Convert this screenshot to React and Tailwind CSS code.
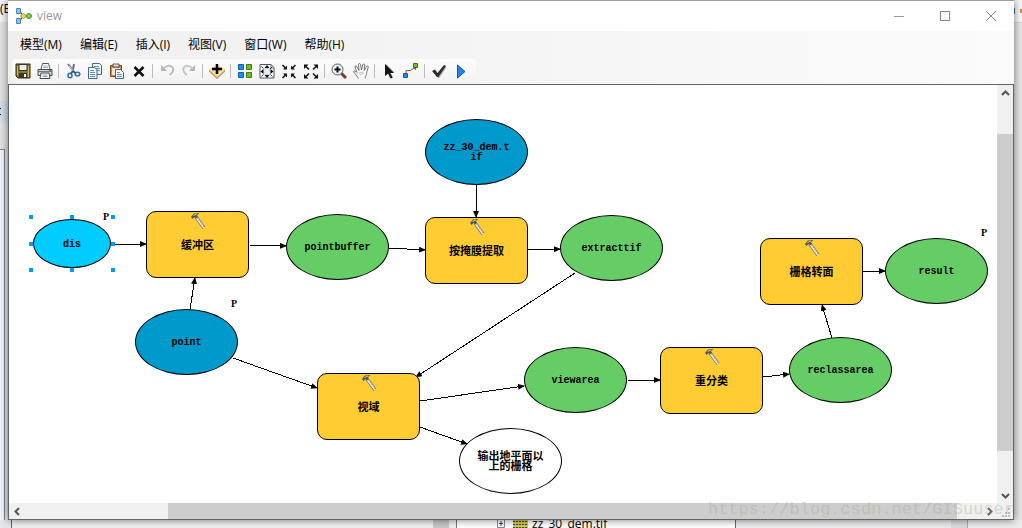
import React, { useState } from 'react';

const MENUS = ['模型(M)', '编辑(E)', '插入(I)', '视图(V)', '窗口(W)', '帮助(H)'];

const NODES = [
  { id: 'dis', type: 'value', label: 'dis', x: 24, y: 134 },
  { id: 'buffer', type: 'tool', label: '缓冲区', x: 137, y: 126 },
  { id: 'point', type: 'input', label: 'point', x: 126, y: 224 },
  { id: 'pointbuffer', type: 'output', label: 'pointbuffer', x: 277, y: 129 },
  { id: 'dem', type: 'input', label: 'zz_30_dem.tif', x: 416, y: 34 },
  { id: 'mask', type: 'tool', label: '按掩膜提取', x: 416, y: 132 },
  { id: 'extracttif', type: 'output', label: 'extracttif', x: 551, y: 130 },
  { id: 'viewshed', type: 'tool', label: '视域', x: 308, y: 288 },
  { id: 'viewarea', type: 'output', label: 'viewarea', x: 515, y: 262 },
  { id: 'above', type: 'empty', label: '输出地平面以上的栅格', x: 450, y: 343 },
  { id: 'reclass', type: 'tool', label: '重分类', x: 651, y: 262 },
  { id: 'reclassarea', type: 'output', label: 'reclassarea', x: 780, y: 252 },
  { id: 'topolygon', type: 'tool', label: '栅格转面', x: 751, y: 153 },
  { id: 'result', type: 'output', label: 'result', x: 876, y: 153 },
];

const EDGES = [
  [102, 159, 137, 159],
  [240, 160, 277, 161],
  [181, 224, 186, 193],
  [224, 273, 308, 303],
  [380, 163, 416, 165],
  [467, 99, 467, 132],
  [519, 165, 551, 164],
  [566, 188, 407, 292],
  [411, 316, 515, 301],
  [411, 342, 458, 359],
  [619, 295, 651, 295],
  [754, 292, 780, 289],
  [823, 253, 813, 220],
  [854, 186, 876, 186],
];

const PARAMS = [
  { x: 94, y: 127 },
  { x: 222, y: 214 },
  { x: 972, y: 143 },
];

const NODE_STYLE = {
  value: 'w-[78px] h-[49px] rounded-[50%] bg-[#00ccff]',
  input: 'w-[103px] h-[66px] rounded-[50%] bg-[#0099cc]',
  output: 'w-[103px] h-[66px] rounded-[50%] bg-[#66cc66]',
  empty: 'w-[103px] h-[66px] rounded-[50%] bg-white',
  tool: 'w-[103px] h-[67px] rounded-[10px] bg-[#ffcc33]',
};

function Icon({ children, size = 16 }) {
  return (
    <svg width={size} height={size} viewBox="0 0 16 16" fill="none" aria-hidden="true">
      {children}
    </svg>
  );
}

const ICONS = {
  save: (
    <Icon>
      <path d="M1 1h14v14H3l-2-2z" fill="#8c7a2c" stroke="#2f2a12" />
      <path d="M4 1.500h8v6H4z" fill="#e9edf0" stroke="#3a3520" />
      <path d="M4 10h8v5H4z" fill="#35352e" />
      <path d="M9 11h2v3H9z" fill="#f4f4f4" />
      <path d="M2.500 3v9M13.500 3v11" stroke="#cdb95c" />
    </Icon>
  ),
  print: (
    <Icon>
      <path d="M4 6l1.500-5.500h6L13 6" fill="#fff" stroke="#555" />
      <path d="M6 3h5M6 4.500h5" stroke="#9bb4cc" />
      <path d="M1 6.500h14v6H1z" fill="#d4d6d2" stroke="#4a4a48" />
      <path d="M1 8.500h14" stroke="#777" />
      <path d="M12 7.500h2" stroke="#3aa03a" />
      <path d="M4 10h8l1 5.500H3z" fill="#fff" stroke="#4a4a48" />
      <path d="M5.500 12h5M5.500 13.500h5" stroke="#7ba7cc" />
    </Icon>
  ),
  cut: (
    <Icon>
      <path d="M3 1l7 9M9 1L7.500 9" stroke="#6c7680" strokeWidth="2" />
      <path d="M4 3l5 6" stroke="#dfe4e8" />
      <ellipse cx="5" cy="12.500" rx="2" ry="2.300" stroke="#2a6fae" strokeWidth="1.500" />
      <ellipse cx="12.500" cy="11" rx="2.300" ry="1.800" stroke="#2a6fae" strokeWidth="1.500" />
      <path d="M6 10.500l2-2.500M10.500 10L8 8" stroke="#1f4f80" strokeWidth="1.500" />
    </Icon>
  ),
  copy: (
    <Icon>
      <path d="M5.500 .5h7l2 2v9h-9z" fill="#eef5fb" stroke="#46627c" />
      <path d="M7 3.500h5M7 5.500h6M7 7.500h6" stroke="#5c91c0" />
      <path d="M1.500 4.500h6l2.500 2v9H1.500z" fill="#f5f9fd" stroke="#46627c" />
      <path d="M3 7.500h4M3 9.500h5M3 11.500h5M3 13.500h5" stroke="#5c91c0" />
    </Icon>
  ),
  paste: (
    <Icon>
      <path d="M1.500 2.500h11v11h-11z" fill="#d98a3a" stroke="#7a4312" />
      <path d="M4 1h6v3H4z" fill="#e4e4e4" stroke="#555" />
      <path d="M3 5h8v7H3z" fill="#f6e4cc" />
      <path d="M6.500 6.500h5l3 3v6h-8z" fill="#f5f9fd" stroke="#46627c" />
      <path d="M8 9.500h3M8 11.500h5M8 13.500h5" stroke="#5c91c0" />
    </Icon>
  ),
  remove: (
    <Icon>
      <path d="M3.500 4l9 9M12.500 4l-9 9" stroke="#111" strokeWidth="2.500" />
    </Icon>
  ),
  undo: (
    <Icon>
      <path d="M2 2v6h6z" fill="#b4b4b4" />
      <path d="M4 6c3-4 8-4 10-1 .8 3-.5 5-3.500 7" stroke="#bdbdbd" strokeWidth="2" />
    </Icon>
  ),
  redo: (
    <Icon>
      <path d="M14 2v6H8z" fill="#b4b4b4" />
      <path d="M12 6C9 2 4 2 2.500 5c-.8 3 .5 5 3.500 7" stroke="#c6c6c6" strokeWidth="2" />
    </Icon>
  ),
  addData: (
    <Icon>
      <path d="M0 7l8-5 8 5v1.500L8 16 0 8.500z" fill="#b58a4e" />
      <path d="M0 7l8-5 8 5-8 7.500z" fill="#fbdc94" />
      <path d="M8 1v10M3 6h10" stroke="#000" strokeWidth="2.500" />
    </Icon>
  ),
  layout: (
    <Icon>
      <path d="M1.500 1.500h5v5h-5zM1.500 9.500h5v5h-5z" fill="#1e8ff0" stroke="#0b5eae" />
      <path d="M9.500 1.500h5v5h-5zM9.500 9.500h5v5h-5z" fill="#78b82a" stroke="#3d7d0c" />
    </Icon>
  ),
  fullExtent: (
    <Icon>
      <path d="M1 1.500h11l3 3V15H1z" fill="#fff" stroke="#555" />
      <path d="M12 1v4h3" stroke="#777" />
      <circle cx="8" cy="8.500" r="3.500" fill="#e3eef8" stroke="#bccbda" />
      <path d="M8 2l2.500 3h-5zM8 15l2.500-3h-5zM1.500 8.500l3-2.500v5zM14.500 8.500l-3-2.500v5z" fill="#111" />
      <path d="M2.500 3.500l2 2M13.500 13.500l-2-2M2.500 13.500l2-2M13 4l-2 2" stroke="#333" />
    </Icon>
  ),
  shrink: (
    <Icon>
      <path d="M1.500 2l3 3M14.500 2l-3 3M1.500 15l3-3M14.500 15l-3-3" stroke="#111" strokeWidth="1.500" />
      <path d="M6 2.500v4H2zM10 2.500v4h4zM6 14.500v-4H2zM10 14.500v-4h4z" fill="#111" />
    </Icon>
  ),
  expand: (
    <Icon>
      <path d="M3 3.500l3 3M13 3.500l-3 3M3 13.500l3-3M13 13.500l-3-3" stroke="#111" strokeWidth="1.500" />
      <path d="M1 1.500h4.500L1 6zM15 1.500h-4.500L15 6zM1 15.500h4.500L1 11zM15 15.500h-4.500L15 11z" fill="#111" />
    </Icon>
  ),
  zoomIn: (
    <Icon>
      <path d="M10 10l5 5" stroke="#7d3a2a" strokeWidth="3" />
      <circle cx="6.500" cy="6.500" r="5.500" fill="#eef3f7" stroke="#555b60" />
      <path d="M6.500 3.500v6M3.500 6.500h6" stroke="#111" strokeWidth="2" />
    </Icon>
  ),
  pan: (
    <Icon>
      <path
        d="M5.500 15.500C4 13 2.500 11 .8 9c0-1.500 1.500-1.500 3.200.5L2 4c0-1.500 1.500-1.500 2 0L6 7.500 5.500 1.500c.2-1.300 1.700-1.300 2 0L8.500 7 9.800 1.500c.5-1 1.800-.8 1.800.5L11.200 7.500l2.300-4c.7-1 1.800-.5 1.700.7L13.800 9c-.2 2-.5 3-1.500 4.500v2"
        fill="#fdfdfd"
        stroke="#555"
        strokeWidth=".8"
      />
      <path d="M6 10l4-1M7 12l4-2" stroke="#bbb" />
    </Icon>
  ),
  select: (
    <Icon>
      <path d="M5 1l8.500 8.500H9.500l2.500 5-2 1-2.500-5L4 13z" fill="#999" />
      <path d="M4 1l9 9H9l2.500 4.500-2 1L7 10.500 4 13z" fill="#151515" />
    </Icon>
  ),
  connect: (
    <Icon>
      <path d="M4.500 7.500h3l3-2h2" stroke="#555" />
      <path d="M3 10V7.500h1.500M12.500 7V5" stroke="#e33" />
      <path d="M.5 10.500h4v4h-4z" fill="#1e8ff0" stroke="#0b5eae" />
      <path d="M10.500 .5h4v4h-4z" fill="#78b82a" stroke="#3d6a0c" />
    </Icon>
  ),
  validate: (
    <Icon>
      <path d="M2 9l3-1.500 2.500 4 6.500-8 1.500 1L8.500 15H7z" fill="#bbb" />
      <path d="M1 8l3-1.500L6.500 10l6.500-8 2 1-7.500 11H6z" fill="#2e2e2e" />
    </Icon>
  ),
  run: (
    <Icon>
      <path d="M4.500 2l7.500 6.500L4.500 15z" fill="#1e82e8" stroke="#0d5db4" />
    </Icon>
  ),
};

const TOOLBAR = [
  ['save', 'print'],
  ['cut', 'copy', 'paste', 'remove'],
  ['undo', 'redo'],
  ['addData'],
  ['layout', 'fullExtent', 'shrink', 'expand'],
  ['zoomIn', 'pan'],
  ['select', 'connect'],
  ['validate', 'run'],
];

function ModelIcon() {
  return (
    <svg width="16" height="16" viewBox="0 0 16 16" aria-hidden="true">
      <path d="M4 3l3 5-3 5M7 8h5" fill="none" stroke="#555" />
      <path d="M.5 .5h4v5h-4z" fill="#8cc4ee" stroke="#4a87b8" />
      <path d="M.5 10.500h4v5h-4z" fill="#8cc4ee" stroke="#4a87b8" />
      <path d="M7.500 5.500l3 2.500-3 2.500L4.500 8z" fill="#ffd84a" stroke="#b88a18" />
      <circle cx="13" cy="8" r="2.500" fill="#7ccf5a" stroke="#3f9a2f" />
    </svg>
  );
}

function Hammer() {
  return (
    <svg
      className="absolute top-0 left-1/2 -translate-x-1/2"
      width="16"
      height="18"
      viewBox="0 0 16 18"
      aria-hidden="true"
    >
      <path d="M6 5l8 11" stroke="#77736a" strokeWidth="3.500" />
      <path d="M6 5l8 11" stroke="#f6efe2" strokeWidth="2" />
      <path d="M7.500 6l7 10" stroke="#a39c8c" strokeDasharray="1 1.500" />
      <path d="M1 5l3-3.500L9.500 1 7 3l1 2-2 1.500L4.500 5 2.500 7z" fill="#555" />
      <path d="M3.500 3.500L7 2" stroke="#ccc" />
    </svg>
  );
}

function Node({ node, onSelect }) {
  return (
    <button
      type="button"
      onClick={() => onSelect(node.id)}
      className={`absolute flex items-center justify-center border border-black pt-[2px] ${NODE_STYLE[node.type]}`}
      style={{ left: node.x, top: node.y }}
    >
      {node.type === 'tool' && <Hammer />}
      <span
        className={`w-[68px] text-center font-bold leading-[10px] break-all ${
          /[a-z]/.test(node.label) ? 'text-[10px]' : 'text-[11px]'
        }`}
      >
        {node.label}
      </span>
    </button>
  );
}

function Handles() {
  return (
    <div className="absolute left-[20px] top-[130px] flex h-[57px] w-[86px] flex-col justify-between">
      {[0, 1, 2].map((row) => (
        <div key={row} className="flex justify-between">
          <i className="size-1 bg-[#0099ff]" />
          <i className="size-1 bg-[#0099ff]" />
          <i className="size-1 bg-[#0099ff]" />
        </div>
      ))}
    </div>
  );
}

function Canvas() {
  const [selected, setSelected] = useState('dis');

  return (
    <div className="relative min-w-0 flex-1 overflow-hidden bg-white font-['Liberation_Mono','Noto_Sans_CJK_SC',monospace] text-black">
      <svg className="absolute inset-0 size-full" aria-hidden="true">
        <defs>
          <marker id="arrow" markerWidth="7" markerHeight="6" refX="6" refY="3" orient="auto">
            <path d="M0 0l7 3-7 3z" fill="#000" />
          </marker>
        </defs>
        {EDGES.map(([x1, y1, x2, y2]) => (
          <line
            key={`${x1},${y1}`}
            x1={x1}
            y1={y1}
            x2={x2}
            y2={y2}
            stroke="#000"
            shapeRendering="crispEdges"
            markerEnd="url(#arrow)"
          />
        ))}
      </svg>
      {selected === 'dis' && <Handles />}
      {NODES.map((node) => (
        <Node key={node.id} node={node} onSelect={setSelected} />
      ))}
      {PARAMS.map(({ x, y }) => (
        <span
          key={x}
          className="absolute font-['Liberation_Serif',serif] text-[10px] leading-[10px] font-bold"
          style={{ left: x, top: y }}
        >
          P
        </span>
      ))}
    </div>
  );
}

function Arrow({ label, d }) {
  return (
    <button type="button" aria-label={label} className="flex size-4 shrink-0 items-center justify-center">
      <svg width="9" height="9" viewBox="0 0 9 9" fill="none" stroke="#555" strokeWidth="2">
        <path d={d} />
      </svg>
    </button>
  );
}

function TitleBar() {
  return (
    <div className="flex h-[30px] items-center bg-white pl-2">
      <ModelIcon />
      <span className="ml-[5px] flex-1 text-xs text-[#999]">view</span>
      <button type="button" aria-label="最小化" className="flex h-full w-[46px] items-center justify-center">
        <span className="h-px w-[10px] bg-[#999]" />
      </button>
      <button type="button" aria-label="最大化" className="flex h-full w-[46px] items-center justify-center">
        <span className="size-[10px] border border-[#888]" />
      </button>
      <button type="button" aria-label="关闭" className="flex h-full w-[46px] items-center justify-center">
        <svg width="10" height="10" viewBox="0 0 10 10" stroke="#888">
          <path d="M0 0l10 10M10 0L0 10" />
        </svg>
      </button>
    </div>
  );
}

function Toolbar() {
  return (
    <div className="mb-px ml-1 flex h-6 w-fit items-center rounded-sm bg-linear-to-b from-[#fcfcfc] to-[#f2f2f2] pr-1">
      {TOOLBAR.map((group, i) => (
        <React.Fragment key={group[0]}>
          {i > 0 && <span className="mx-[2px] h-[14px] w-[2px] border-l border-[#bbb]" />}
          {group.map((name) => (
            <button
              key={name}
              type="button"
              aria-label={name}
              className="flex h-[22px] w-[22px] items-center justify-center"
            >
              {ICONS[name]}
            </button>
          ))}
        </React.Fragment>
      ))}
    </div>
  );
}

function ModelWindow() {
  return (
    <div className="relative z-10 flex min-w-0 flex-1 flex-col border-t border-[#a0a0a0] bg-linear-to-r from-[#efefef] to-[#fbfbfb] shadow-[0_0_8px_#00000088]">
      <TitleBar />
      <div className="flex h-7 items-center gap-[18px] pl-3 text-xs text-black">
        {MENUS.map((menu) => (
          <button key={menu} type="button">
            {menu}
          </button>
        ))}
      </div>
      <Toolbar />
      <div className="flex min-h-0 flex-1 flex-col border border-[#646464]">
        <div className="flex min-h-0 flex-1">
          <Canvas />
          <div className="flex w-4 flex-col items-center bg-[#f0f0f0]">
            <Arrow label="向上" d="M1 6l3.500-3.500L8 6" />
            <div className="grow-33" />
            <div className="w-full grow-315 bg-[#cdcdcd]" />
            <div className="grow-36" />
            <Arrow label="向下" d="M1 3l3.500 3.500L8 3" />
          </div>
        </div>
        <div className="flex h-4 items-center bg-[#f0f0f0]">
          <Arrow label="向左" d="M6 1L2.500 4.500 6 8" />
          <div className="grow-143" />
          <div className="h-full grow-787 bg-[#cdcdcd]" />
          <div className="grow-24" />
          <Arrow label="向右" d="M3 1l3.500 3.500L3 8" />
          <svg width="16" height="15" viewBox="0 0 16 15" fill="#bbb" aria-hidden="true">
            <path d="M11 4h2v2h-2zM8 8h2v2H8zM11 8h2v2h-2zM5 11h2v2H5zM8 11h2v2H8zM11 11h2v2h-2z" />
          </svg>
        </div>
      </div>
      <span className="pointer-events-none absolute right-0 bottom-0 font-['Liberation_Mono',monospace] text-[17px] leading-5 text-[#a8a890]/40">
        https://blog.csdn.net/GISuuser
      </span>
    </div>
  );
}

export default function App() {
  return (
    <div className="flex h-screen flex-col overflow-hidden bg-[#f0f2f2] font-['Open_Sans','Noto_Sans_CJK_SC',sans-serif]">
      <div className="flex min-h-0 flex-1">
        <div className="flex w-2 flex-col overflow-hidden bg-[#e2e2e2] text-xs text-black">
          <div className="h-[22px] bg-[#f4f4f4] leading-[18px] whitespace-nowrap">(E</div>
          <div className="mt-[79px] h-[21px] bg-[#cfdcea] leading-5">
            <svg width="8" height="21" viewBox="0 0 8 21" aria-hidden="true">
              <path d="M0 7h1v1H0zM0 13h1v1H0z" fill="#000" />
            </svg>
          </div>
          <div className="mt-[27px] mr-[3px] flex-1 border-t border-r border-[#7b8299] bg-[#f2f4f8]" />
        </div>
        <ModelWindow />
        <div className="flex w-2 flex-col overflow-hidden bg-[#e6e6e6]">
          <div className="h-[23px] border-b border-[#d5d5d5] bg-[#f7f7f7] pt-2">
            <svg width="8" height="6" viewBox="0 0 8 6" aria-hidden="true">
              <path d="M0 0h1v6H0z" fill="#3c78b4" />
              <path d="M6 1h2v4H6z" fill="#d9902f" />
            </svg>
          </div>
        </div>
      </div>
      <div className="flex h-2 overflow-hidden">
        <div className="w-3 border-r border-[#666] bg-[#e4e6ea]" />
        <div className="w-[421px]" />
        <div className="w-4 bg-[#c8c8c8]" />
        <div className="w-2 border-r border-[#777]" />
        <div className="flex w-[279px] items-center gap-2 border-r border-[#2a7ac0] bg-white pl-10 text-xs leading-2 text-black">
          <svg width="8" height="8" viewBox="0 0 8 8" fill="none" aria-hidden="true">
            <path d="M.5 0v7.500h7V0" stroke="#888" />
            <path d="M2 3.500h4M4 1v5" stroke="#27418a" />
          </svg>
          <svg width="15" height="8" viewBox="0 0 15 8" aria-hidden="true">
            <path d="M0 0h15v8H0z" fill="#d8c84a" />
            <path d="M0 1.500h15M0 4.500h15M0 7.500h15" stroke="#39424a" strokeDasharray="2 1" />
          </svg>
          <span className="-ml-1">zz_30_dem.tif</span>
        </div>
        <div className="w-[215px] bg-[#ececec]" />
        <div className="w-[17px] border-r border-[#aaa] bg-[#dcdcdc]" />
        <div className="flex-1 bg-[#ececec]" />
      </div>
    </div>
  );
}
